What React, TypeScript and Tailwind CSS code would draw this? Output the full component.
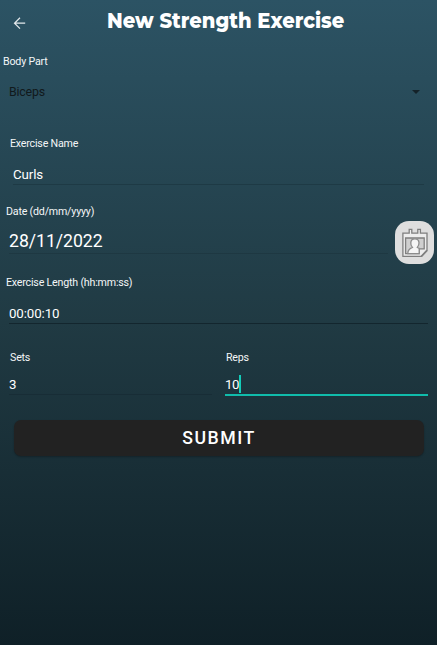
import type { ReactNode } from "react";

function Label({ children, className }: { children: ReactNode; className: string }) {
  return (
    <label className={`block h-4 whitespace-nowrap text-[10.67px] leading-4 tracking-[-0.2px] text-[#f4f6f7] ${className}`}>
      {children}
    </label>
  );
}

function CalendarIcon() {
  return (
    <svg className="h-[30px] w-[26px]" viewBox="0 0 26 30" fill="none" stroke="#7f7f7f" strokeWidth="1.3">
      <path
        d="M.9 5.2H7.2V1.4H9.8V5.2H15.8V1.4H18.4V5.2H25V22.4L19.4 28.4H.9Z"
        fill="#ededed"
      />
      <path d="M3.6 10H22.2V20.8H17.2V25.6H3.6Z" fill="#cfcfcf" />
      <path
        d="M5.8 25.6C5.8 22.6 7.4 20.6 10.4 19.4C9 18 8.6 16.6 8.8 14.6C9 12 10.5 10.8 12.9 10.8C15.4 10.8 16.9 12.2 17 14.8C17.1 16.8 16.4 18.2 15.3 19.4L17.2 20.4V25.6Z"
        fill="#f5f5f5"
        stroke="#8c8c8c"
      />
      <path d="M19.4 28.4L25 22.4" strokeWidth="1.6" />
    </svg>
  );
}

export default function App() {
  return (
    <main className="flex h-[645px] w-[437px] flex-col overflow-hidden bg-[linear-gradient(to_bottom,#2c5364,#203a43_50%,#0f2027)] font-['Roboto',sans-serif] text-white">
      <header className="flex h-[47px] shrink-0 items-start pl-[13px]">
        <button aria-label="Back" className="mt-[16px] h-[14px] w-[14px]">
          <svg className="h-[14px] w-[14px]" viewBox="0 0 14 14" fill="none" stroke="#e4e9ec" strokeWidth="1.2">
            <path d="M12.2 7.2H1.5M7 1.8L1.5 7.2L7 12.7" />
          </svg>
        </button>
        <h1 className="ml-[80px] mt-[6px] origin-left scale-x-[0.93] whitespace-nowrap font-['Montserrat','Inter',sans-serif] text-[21px] font-extrabold leading-[30px]">
          New Strength Exercise
        </h1>
      </header>

      <section className="h-[89px] shrink-0 pt-[7px]">
        <Label className="pl-[3px]">Body Part</Label>
        <div className="mt-[11px] flex h-[22px] items-center justify-between pl-[9px] pr-[17px] text-[#11191c]">
          <span className="text-[12.4px] tracking-[-0.2px]">Biceps</span>
          <span className="mb-px h-0 w-0 border-x-[4px] border-t-[4px] border-x-transparent border-t-[#142229]" />
        </div>
      </section>

      <section className="h-[68px] shrink-0">
        <Label className="pl-[10px]">Exercise Name</Label>
        <div className="mx-[13px] mt-[11px] h-[22px] border-b border-[#1e3a45] text-[13.3px] leading-[23px] tracking-[-0.1px]">
          Curls
        </div>
      </section>

      <section className="h-[71px] shrink-0">
        <Label className="pl-[6px]">Date (dd/mm/yyyy)</Label>
        <div className="flex">
          <div className="ml-[9px] mt-px h-[33px] w-[379px] border-b border-[#1e3842] pt-[8px] text-[17.7px] leading-[24px] tracking-[-0.05px]">
            28/11/2022
          </div>
          <button
            aria-label="Choose date"
            className="ml-[7px] mt-px flex h-[43px] w-[39px] items-center justify-center rounded-[14px] bg-[#dedede]"
          >
            <CalendarIcon />
          </button>
        </div>
      </section>

      <section className="h-[75px] shrink-0">
        <Label className="pl-[6px]">Exercise Length (hh:mm:ss)</Label>
        <div className="mx-[9px] mt-[11px] h-[22px] border-b border-[#13262e] text-[13.3px] leading-[23px] tracking-[-0.1px]">
          00:00:10
        </div>
      </section>

      <section className="flex h-[70px] shrink-0 pl-[9px]">
        <div className="w-[203px]">
          <Label className="pl-px">Sets</Label>
          <div className="mt-[8px] h-[21px] border-b border-[#182d36] text-[13.3px] leading-[21px]">3</div>
        </div>
        <div className="ml-[13px] w-[203px]">
          <Label className="pl-px">Reps</Label>
          <div className="mt-[8px] flex h-[22px] border-b-2 border-[#10bcab] text-[13.3px] leading-[21px] tracking-[-0.4px]">
            10
            <span className="mt-px h-[18px] w-[2px] bg-[#12cdb9]" />
          </div>
        </div>
      </section>

      <button className="ml-[14px] h-[36px] w-[410px] shrink-0 rounded-[7px] bg-[#222] text-[17.7px] font-medium leading-[36px] tracking-[1.5px] shadow-[0_1px_2px_#0004]">
        SUBMIT
      </button>
    </main>
  );
}
